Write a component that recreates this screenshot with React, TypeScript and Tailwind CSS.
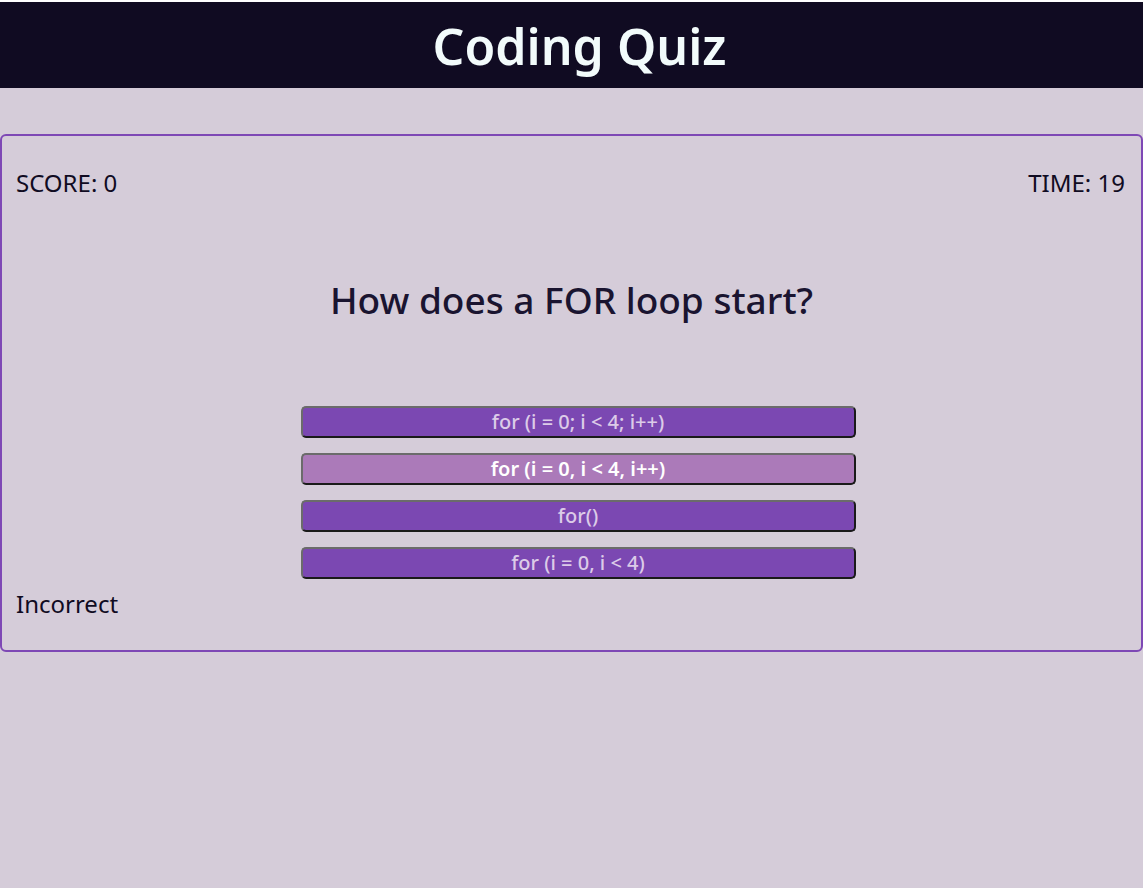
import React from "react"

const answers = [
      { text: "for (i = 0; i < 4; i++)", hover: false },
      { text: "for (i = 0, i < 4, i++)", hover: true },
      { text: "for()", hover: false },
      { text: "for (i = 0, i < 4)", hover: false },
]

export default function App() {
      return (
            <div className="min-h-screen bg-[#d5ccd9] font-['Noto_Sans',sans-serif] text-[#100b22]">
                  {/* Header */}
                  <header className="h-[86px] mt-[2px] bg-[#100b22] flex items-center justify-center pl-[16px]">
                        <h1 className="text-[50px] font-semibold text-[#f2fbfb] leading-none pt-[2px]">Coding Quiz</h1>
                  </header>

                  {/* Quiz card */}
                  <main className="mt-[46px] border-2 border-[#7e48b5] rounded-md h-[518px] px-[14px] pt-[31px]">
                        <div className="flex justify-between text-[24px] leading-[32px] pr-[2px]">
                              <span>SCORE: 0</span>
                              <span>TIME: 19</span>
                        </div>
                        <h2 className="text-center text-[37px] leading-[48px] font-medium mt-[77px] text-[#1a1430]">How does a FOR loop start?</h2>
                        <div className="flex flex-col items-center gap-[15px] mt-[82px] pl-[13px]">
                              {answers.map((a) => (
                                    <button
                                          key={a.text}
                                          className={
                                                a.hover
                                                      ? "w-[555px] h-[32px] rounded-[5px] border-2 border-t-[#6b6b6b] border-l-[#6b6b6b] border-b-[#1a1a1a] border-r-[#1a1a1a] bg-[#ab7ab9] text-white font-semibold text-[20px] leading-none"
                                                      : "w-[555px] h-[32px] rounded-[5px] border-2 border-t-[#6b6b6b] border-l-[#6b6b6b] border-b-[#1a1a1a] border-r-[#1a1a1a] bg-[#7b48b2] text-[#dccbe8] font-medium text-[20px] leading-none"
                                          }
                                    >
                                          {a.text}
                                    </button>
                              ))}
                        </div>
                        <p className="text-[24px] leading-[32px] mt-[9px]">Incorrect</p>
                  </main>
            </div>
      )
}
